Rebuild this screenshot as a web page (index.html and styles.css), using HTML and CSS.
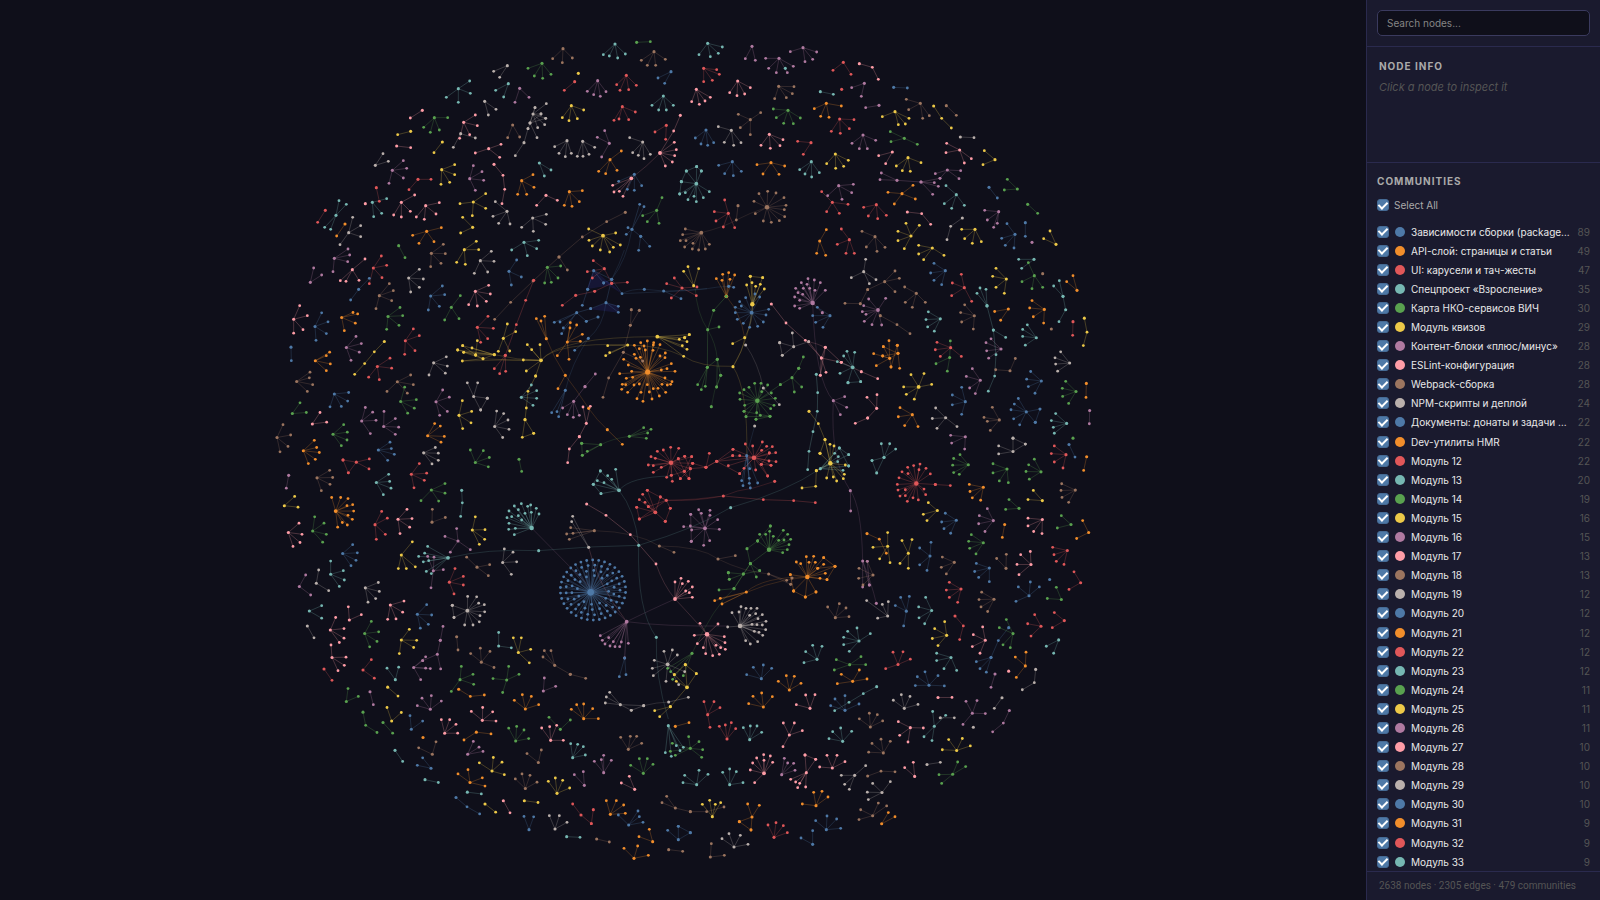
FILE: index.html
```html
<!DOCTYPE html>
<html lang="ru">
<head>
  <meta charset="UTF-8">
  <meta name="viewport" content="width=device-width, initial-scale=1.0">
  <title>Graph</title>
  <link rel="stylesheet" href="styles.css">
</head>
<body>

<main class="graph-area">
  <svg id="graph" class="graph" viewBox="0 0 1366 900" role="img" aria-label="Node graph"></svg>
</main>

<aside class="sidebar">
  <div class="search-wrap">
    <input type="text" class="search" id="search" placeholder="Search nodes..." aria-label="Search nodes">
  </div>
  <section class="info-panel">
    <h3>Node Info</h3>
    <p class="empty">Click a node to inspect it</p>
  </section>
  <section class="legend-wrap">
    <h3>Communities</h3>
    <label class="select-all"><input type="checkbox" id="select-all" checked>Select All</label>
    <div class="legend" id="legend"></div>
  </section>
  <footer class="stats">2638 nodes · 2305 edges · 479 communities</footer>
</aside>

<script src="app.js"></script>
</body>
</html>
```
FILE: styles.css
```css
* {
  box-sizing: border-box;
  margin: 0;
  padding: 0;
}

body {
  display: flex;
  height: 100vh;
  background: #0f0f1a;
  color: #e8e8e8;
  font-family: Inter, "Liberation Sans", sans-serif;
  font-size: 10px;
  overflow: hidden;
}

.graph-area {
  flex: 1;
  min-width: 0;
}

.graph {
  display: block;
  width: 100%;
  height: 100%;
}

.sidebar {
  display: flex;
  flex-direction: column;
  width: 234px;
  background: #1a1a2e;
  border-left: 1px solid #2a2a4e;
}

.search-wrap {
  padding: 10px;
  border-bottom: 1px solid #2a2a4e;
}

.search {
  display: block;
  width: 100%;
  height: 26px;
  padding: 0 9px;
  background: #0f0f1a;
  border: 1px solid #3a3a5e;
  border-radius: 5px;
  color: #e0e0e0;
  font: inherit;
  outline: none;
}

.search::placeholder {
  color: #858585;
}

.search:focus {
  border-color: #4e79a7;
}

h3 {
  color: #aaa;
  font-size: 10px;
  font-weight: 700;
  line-height: 14px;
  letter-spacing: 1px;
  text-transform: uppercase;
}

.info-panel {
  min-height: 116px;
  padding: 12px;
  border-bottom: 1px solid #2a2a4e;
}

.empty {
  margin-top: 7px;
  color: #555;
  font-size: 11px;
  font-style: italic;
  line-height: 14px;
}

.legend-wrap {
  display: flex;
  flex: 1;
  flex-direction: column;
  min-height: 0;
  padding: 11px 10px 0;
}

.select-all {
  display: flex;
  align-items: center;
  gap: 5px;
  margin: 9px 0;
  color: #aaa;
  line-height: 16px;
}

.legend {
  display: flex;
  flex: 1;
  flex-direction: column;
  min-height: 0;
  overflow: hidden;
}

.legend-item {
  display: flex;
  flex: 1;
  align-items: center;
  gap: 6px;
  min-height: 19px;
  cursor: pointer;
}

.dot {
  flex: none;
  width: 10px;
  height: 10px;
  border-radius: 50%;
}

.name {
  flex: 1;
  min-width: 0;
  overflow: hidden;
  white-space: nowrap;
  text-overflow: ellipsis;
}

.count {
  color: #555;
}

input[type="checkbox"] {
  display: flex;
  flex: none;
  align-items: center;
  justify-content: center;
  width: 12px;
  height: 12px;
  appearance: none;
  background: #1a1a2e;
  border: 1px solid #3a3a5e;
  border-radius: 3px;
  cursor: pointer;
}

input[type="checkbox"]:checked {
  background: #4e79a7;
  border-color: #456a94;
}

input[type="checkbox"]:checked::after {
  content: "";
  width: 4px;
  height: 7px;
  margin-bottom: 2px;
  border: solid #fff;
  border-width: 0 2px 2px 0;
  transform: rotate(45deg);
}

.stats {
  padding: 8px 12px;
  border-top: 1px solid #2a2a4e;
  color: #555;
  font-family: Roboto, "Liberation Sans", sans-serif;
  line-height: 12px;
  white-space: nowrap;
}

/* graph */
.edge {
  stroke-opacity: 0.26;
}

.link {
  stroke-opacity: 0.18;
}

.hull {
  fill: #4a4aff;
  fill-opacity: 0.12;
}

/* community colours */
.b { background: #4e79a7; fill: #4e79a7; stroke: #4e79a7; }
.o { background: #f28e2b; fill: #f28e2b; stroke: #f28e2b; }
.r { background: #e15759; fill: #e15759; stroke: #e15759; }
.t { background: #76b7b2; fill: #76b7b2; stroke: #76b7b2; }
.g { background: #59a14f; fill: #59a14f; stroke: #59a14f; }
.y { background: #edc948; fill: #edc948; stroke: #edc948; }
.p { background: #b07aa1; fill: #b07aa1; stroke: #b07aa1; }
.k { background: #ff9da7; fill: #ff9da7; stroke: #ff9da7; }
.n { background: #9c755f; fill: #9c755f; stroke: #9c755f; }
.s { background: #bab0ac; fill: #bab0ac; stroke: #bab0ac; }

circle {
  stroke-width: 0;
}

path.edge,
path.link {
  fill: none;
}
```
FILE: app.js
```js
const COLORS = ['b', 'o', 'r', 't', 'g', 'y', 'p', 'k', 'n', 's'];

const NAMES = [
  'Зависимости сборки (package…',
  'API-слой: страницы и статьи',
  'UI: карусели и тач-жесты',
  'Спецпроект «Взросление»',
  'Карта НКО-сервисов ВИЧ',
  'Модуль квизов',
  'Контент-блоки «плюс/минус»',
  'ESLint-конфигурация',
  'Webpack-сборка',
  'NPM-скрипты и деплой',
  'Документы: донаты и задачи …',
  'Dev-утилиты HMR'
];

const COUNTS = [89, 49, 47, 35, 30, 29, 28, 28, 28, 24, 22, 22, 22, 20, 19, 16, 15,
  13, 13, 12, 12, 12, 12, 12, 11, 11, 11, 10, 10, 10, 10, 9, 9, 9];

// Node positions, grouped by tile. One cluster per line:
//   color[size] hub leaf leaf ...   a leaf is linked to the hub
//   >x,y                            linked to the node before it
//   @x,y,r,n                        ring of n leaves
//   ~color start control end        long link between clusters
//   #a b c                          filled hull
const TILES = [
  { x: 270, y: 30, sx: 3, sy: 3, data: `
s 712,107 671,124 689,142
g 816,100 774,115 793,138 818,145 843,133
t 565,176 599,153 601,190 529,202 565,217
t 715,161 677,181 701,201
p 749,175 735,217 777,202
s 644,214 678,238 655,255
k 457,241 421,264
g 493,263 533,263 461,292 481,307 508,300
k 581,277 616,255 622,287 599,314 569,325
s 572,311 616,324 550,352
y 422,304 383,314
k 380,348 422,353
y 517,336 492,368
n 728,285 713,323 749,321
s 789,252 829,221 795,233 813,252 827,265 824,284 803,293 780,279
s 780,279 795,233 813,252 827,265 774,296 801,323
s 762,338 774,296 736,377
k 656,356 693,343 689,382 616,369
s 316,406 339,371 355,394
p 367,421 400,392 410,415 400,444 357,460
r 444,448 483,448 417,479
r 319,473 328,514
y 515,419 554,404 554,434 539,457 513,463
p 599,446 610,407 636,425 641,451 616,481
k 672,403 >699,436 >704,478 >696,521
t 808,399 823,438 843,420
o 755,452 789,434 792,472 743,493 770,493
t 198,556 207,512 229,523 164,592 182,598
r 166,541 143,577
k 286,521
t 307,517 350,506 311,560 335,550
k 394,517 434,495 421,544 394,561 371,555
k 467,527 508,518 498,552 463,568 439,561
y 610,516 647,491 570,521 647,535 607,557
s 711,544 676,515 669,559 686,580 720,582
k 828,496 800,526 862,511
o 225,582 200,618
s 236,608 248,562 272,587 272,620 210,644
o 470,604 514,593 428,616 447,640 492,635
y 608,592 578,562 572,609
s 788,564 829,553 827,583 755,592 790,604
g 386,647 405,683
n 484,670 520,643 526,671 513,700 482,710
y 583,659 619,634 626,659 560,697 586,703
t 762,637 806,631 800,656 725,660 772,677
p 193,685 234,657 239,675 233,695 189,725
s 631,692 664,664 672,694 653,726 613,730
p 121,757 131,714 155,735
k 247,719 285,687 211,752 228,754 267,751
r 310,714 334,678 350,706 336,743 298,761
b 266,778 298,745 242,810
b 717,724 740,690 754,741 724,765
s 416,744 448,718 460,747 448,772 422,786
n 328,797 358,761 370,782 365,812 318,836
b 482,798 517,768 524,794 508,829 475,840
k 616,784 656,766 661,792 649,814 622,828 596,824` },

  { x: 550, y: 30, sx: 3, sy: 3, data: `
n 39,56 8,86 37,98 67,84
t 195,42 160,74 178,78 203,84 226,72
g 260,37 301,35
n 312,65 274,91 292,106 317,106 346,88
t 473,40 517,51 505,70 481,80 447,74
p 606,49 586,86 616,91
p 687,85 647,85 656,115 679,128 712,128 730,109
t 706,115
p 759,53 721,65 800,66 788,88 765,95
y 85,130
r 74,155 43,181
p 143,152 112,184 131,194 151,199 168,185
r 229,136 200,164 210,181 236,179 259,166
b 363,125 324,144 344,160
r 461,115 500,119 508,133 487,151 461,155
t 340,198 306,226 326,240 349,240 370,226
k 439,178 425,215 448,223 465,213 481,202
k 563,153 539,188 561,197 584,192 601,173
n 686,169 732,170 727,191 709,203 674,206
y 64,227 101,240 82,266 57,272 37,263
r 217,230 256,246 236,269 207,267 192,271
g 714,241 670,237 679,263 701,280 730,281 751,264
o 829,220 793,236 812,259 837,262 874,228
n 601,269 565,253 632,248 571,293 601,314
k 391,256 >371,303 >330,369
k2 330,369 373,337 379,359 374,377 367,396 346,408
r 349,286 315,306 347,328
b 468,300 436,324 453,342 473,346 491,338
s 544,301 505,290 523,337 551,346 573,338
k 658,313 633,346 661,355 690,347 699,329
r 783,338 743,334 760,373
s 51,332 14,350 27,370 46,380 64,370
s 98,334 134,352 117,373 99,379 82,379
s 278,336 239,323 248,368 265,376 282,386 301,373
p 178,340 164,302 142,322 155,381
o 180,389 214,363 146,424 167,431 201,421
b 547,395 506,406 524,431 550,437 574,424
o 663,398 621,404 704,408 687,433 639,432
t 784,395 749,419 765,432 785,441 808,428
t2 439,461 409,423 440,410 454,423 394,455 389,492 406,488 414,509 439,515 432,499 460,503 478,485
t 409,423 440,410 394,455
t 454,423 440,410
t 394,455 389,492
b 253,433 206,454 232,478 253,481 275,467
k2 244,445 188,466 192,486 208,484 219,499
~k 244,445 290,410 330,369
o 58,485 97,482 88,515 66,529 43,526
r 535,550 524,510 493,545 498,573 520,591 554,593
n 564,527 559,570
n3 651,532 627,491 653,484 678,489 702,503 708,526 703,539 704,560 688,572 664,577 640,573 616,551 612,514
n2 454,608 406,597 398,614 391,632 408,632 429,640 404,651 427,657 446,660 466,657 478,643
~n 454,608 520,592 559,570
~n 559,570 600,548 651,532
g 320,541 336,503 278,557 292,575 327,580
n 226,547 >170,575 >97,621 >27,681 >52,720
n 27,681 >-51,753 >-118,817 >-166,868
y2 159,617 116,597 117,631 127,648 151,660 179,666 190,652 211,645 197,609
b 246,598 269,523 282,530 234,593 229,613 272,619
b 272,619 266,661 299,649
o 809,633 829,599 800,670 827,676` },

  { x: 830, y: 30, sx: 3, sy: 3, data: `
r 40,97 9,121 63,133
k 88,101 >127,112 >145,148
p 103,160 65,173 94,199
r 35,178
t -29,185 10,193
b 191,172 232,174
p 147,226 107,233
n 271,220 229,208 236,239 278,265 298,257
y 195,245 157,260 205,284 226,282 237,265
y 311,228 >335,265 >364,294
n 349,227 379,256
r 29,267 72,269 58,296 31,310 4,304
p 99,315 137,331 112,356 88,356 66,340
g 223,325 181,305 183,335 262,343
s 391,321 432,323
k 389,360 350,340 348,368 403,399 424,386
y 495,389 463,362 459,404
k 187,366 146,377 167,401
y 234,383 199,408 217,422 241,424 273,398
y 16,372 55,391 41,409 17,415 -10,401
p 352,420 316,431 330,445 387,446 392,422
p 201,451 154,429 150,449 273,456
p 273,456 330,445 313,458 325,469 308,493
p 26,467 70,463 65,488 36,508 -7,497
r 7,517 54,523 28,550 -10,545 -25,485
o 216,491 249,466 174,487 256,507 193,522
t 379,494 348,467 343,521 365,535 403,526
b 477,472 502,504
g 562,477 532,448 523,480
g 593,523 623,550
p 506,545 464,541 472,570 491,592 502,580
r 139,524 101,532 115,558 143,566 169,556
k 232,546 >275,551 >302,583
s 397,564 >362,589 >351,629
y 435,598 395,598 404,626 427,640 454,635
b 555,613 531,581 515,625 526,646 552,654
b 586,578 586,619
y 678,643 660,603 641,626
p 606,637
r 58,629 34,597 22,643 48,670 73,670
n 135,620 96,604 109,651 141,664 165,652
y 243,618 228,580 268,586 204,604 204,632 223,656
y 307,654 266,646 266,672 281,689 342,676
b 346,722 312,700 302,729 312,751 335,764
s 101,725 107,688 64,743 118,761 138,749
r 403,773 394,733 367,759 365,797 425,814
y 529,747 498,715 488,739 498,772 523,790
g 613,737 595,698 576,755 606,776 638,772
t 612,688 566,688 575,715
n 638,731
o 741,781 729,737 710,755
t 699,799 688,752 671,768
t 471,827 441,790 450,774 468,778
n 164,755 195,723 208,745 195,785 113,779
n 91,821 113,779 45,820
n 259,790 224,771 226,817 247,832 286,817` },

  { x: 430, y: 250, sx: 3, sy: 3, data: `
#491,58 470,118 545,105
#521,90 545,100 576,131 545,112
#480,178 528,158 566,168 567,188
g 64,172 91,137 44,210 87,206
r 142,232 174,199 190,235 173,266 152,277
g 352,52 392,48 384,84 364,97 344,99
r 523,56 490,32 472,65 487,84 545,100
r 545,100 592,97 494,124
r 437,136 494,124 397,166
b 545,88 521,99 576,131
b 491,62 473,118 545,88 521,99
b 473,118 457,166
b 528,158 482,176 565,169 565,187 545,88
b 440,188 373,217 390,216 400,234 395,251 469,214 482,176
b 504,201 469,214
b 475,265 434,301
~b 606,-63 590,30 545,88
~b 583,0 570,40 545,88
~b 528,158 520,230 475,265
~b 475,265 425,340 406,421
b 406,421 365,488 381,485 386,500
~b 576,131 605,116 643,118
~b 643,118 670,120 701,123
~b 576,131 720,125 831,116
b 701,123 753,146
b 643,118
~b 701,123 760,125 831,116
~b 831,116 860,110 897,109
r 756,114 733,84 710,101 724,144 801,111 799,137
y 791,107 774,50 761,64 806,56
~g 795,110 800,190 833,239
g 833,239 851,181 867,231 832,352
~g 833,239 858,280 862,328
g 832,352 803,404 826,409 814,419 862,328
g 862,328 860,411 872,376
g 872,376 860,411
~g 872,376 850,420 844,470
g 844,470
r 311,91 >287,151 >259,224 >226,316
r 226,316 193,356 227,364 209,371
o 349,266 319,206 333,213 344,199
~o 349,266 370,320 406,376
o 406,376 384,416
~o 406,376 440,420 476,475
~o 476,475 500,510 532,539
o 476,475
o 532,539 >577,583
o 412,276 421,218 420,234 440,225 457,253 451,274 417,328 382,317
y2 333,331 292,284 330,284 305,299 280,330 289,363 317,378
y 317,378 >294,424 >289,474 >285,509 >277,562 >311,550
y 285,509 311,550
y 193,314 83,300 98,287 126,294 101,307 137,315
y 137,315 142,272 83,300 98,287
y 159,326 137,315 97,333 101,307 193,314
~y 159,326 250,332 333,331
~y 97,333 220,328 333,331
~y 193,314 260,330 333,331
y 220,265 232,222 257,245 205,304 239,303
t 274,442 304,405 320,422 320,445 309,466
~y 333,331 390,260 682,260
~y 333,331 380,275 593,285
y 593,285 533,287 539,308 527,317
~y 593,285 690,285 761,319
y2 682,260 748,268 764,263 778,254 771,275 757,287 771,298 761,319
~y 761,319 810,352 908,349
y 764,263 778,254
n 604,179 >601,226 >580,307 >536,384 >519,442
n 628,181 601,226
n 638,333 580,307
o4 653,366 652,273 671,278 690,284 706,309 724,341 735,364 726,395 707,427 688,438 666,447 639,454 621,446 593,427 575,418 577,403 569,371 581,328 613,286 632,278 646,300 628,296 669,301 690,318 705,323 711,356 694,360 705,384 722,403 696,403 712,405 684,415 670,416 652,404 658,426 633,427 628,402 612,405 587,404 608,382 589,385 605,364 595,345 613,313 618,325 631,322 642,288 670,285
g 598,559 641,533 663,538 653,549 649,565
~g 512,584 550,565 598,559
g 512,584 455,580 472,604 457,616
g 455,580 457,616
p 431,454 398,474 412,494 430,502 448,496 465,410
p 465,410 496,372
k 469,520 459,471 481,469 448,560
k 448,560 >418,597 >413,638
r3 723,638 722,592 746,595 764,619 785,620 745,626 788,640 781,656 777,686 763,664 751,686 727,694 724,676 710,682 694,652 670,667 670,647 655,645 663,620 682,604 700,600 676,625
r 763,664 745,626 785,620 788,640 777,686 724,676
r 781,656 751,686 777,686 764,619 828,652
r 828,652 838,610 860,634 788,640` },

  { x: 700, y: 250, sx: 3, sy: 3, data: `
o2 79,139 49,86 68,73 86,68 104,75 90,88 66,91
b 86,109 101,112
g 79,139 41,181
~o 79,139 122,190 134,263
y3 157,163 151,79 188,83 156,98 140,105 167,109 181,103 193,117
y 151,79 188,83
b2 155,188 137,143 119,155 124,168 106,172 106,188 112,208 130,220 149,232 173,229 190,216 198,195 206,178 179,141 165,132
~y 157,163 162,210 134,263
~y 134,263 130,300 99,350
~y 157,163 152,260 99,350
y 134,263 98,281
~y 99,350 145,420 140,617
y 99,350
~s 137,285 175,340 190,414
s 190,414 238,464
s 137,285
s 164,528
~b 164,528 155,560 140,617
p3 338,159 324,86 343,90 304,98 321,103 361,98 287,115 310,115 329,115 376,121 294,128 345,121 284,141 299,151 308,133 284,168 299,175
b 390,197 338,197 352,172 347,217 369,232
p 367,188 338,159
k 214,162 >258,219 >316,271 >364,324
k 364,324 326,275 376,292 378,367 361,376 424,337
k 376,292 424,337 361,376
~k 326,275 350,280 376,292
k 484,365 424,337 533,386
s 281,290 277,249 239,278 247,316 326,275
s 239,278 247,316
t2 458,352 441,304 464,307 431,318 412,335 420,370 444,398 482,395
t 444,398 482,395
p 400,452 434,440 440,472 421,494
~p 338,159 345,390 400,452
~p 400,452 390,630 451,722
t 349,373 >353,428 >352,484 >339,545 >327,604 >323,659
y 327,484 >355,521 >375,569 >391,640
y3 391,640 390,583 402,588 360,610 349,662 380,684 400,681 410,693 430,686 433,673 436,645 375,569
y 360,610 375,569
y 349,662 >347,709 >306,714
t 361,656 418,594 404,610 415,620 446,614 413,635 446,648 429,661
t 418,594 446,614 446,648
k 530,475 501,442 531,434 503,504
k 503,504 466,520
o 569,325 567,272 550,290 521,311 548,318 594,310 529,347 573,351
o 594,310 550,290 592,286 599,355 548,318
o 592,286 573,351
r3 162,623 187,576 158,588 200,589 217,590 136,582 208,609 227,608 185,601 207,633 228,635 213,646 184,643 203,678 167,660 132,655 119,671 98,617 119,617 99,598 50,634 85,647
r 50,634 99,598 119,671 17,652 98,617
r 184,643 208,609 203,678 213,646
b 140,617 149,656 125,692 148,685 129,707 148,700 151,714 173,699
~r 224,694 190,705 160,714
r 224,694
g3 172,452 164,400 183,400 203,405 147,412 132,419 119,429 120,448 134,466 132,484 138,500 168,508 170,488 181,496 210,499 212,476 222,466 226,445 214,429 185,425 241,404
g 210,499 168,508 132,484 138,500
g 276,383 241,404 296,355 305,411 283,426
g 296,355 310,321
p2 534,180 557,145 506,147 491,167 487,185 498,193 493,214 516,224 545,225
n 541,197 >591,224 >630,251` },

  { x: 430, y: 460, sx: 3, sy: 3, data: `
t2 567,91 557,28 511,33 533,47 545,58 490,73 502,62 522,68 513,101
t 490,73 511,33 513,101
t3 305,204 274,131 253,138 293,139 302,135 319,145 265,149 237,153 285,160 304,157 327,162 231,173 245,170 265,167 237,190 275,180 236,208 256,205 253,224
~t 567,91 600,50 723,48
~t 567,91 615,150 626,256
~p 305,204 440,345 590,485
b6 482,397 @489,390,98,34 @489,390,81,25 @489,390,64,18 @489,390,47,12
k 470,132 >528,166 >601,224 >678,312
~k 678,312 700,375 735,417
r2 676,157 652,91 638,103 628,119 691,111 645,127 655,140 620,142 706,184
r 709,121 652,91 691,111 655,140 628,177 721,145
r 628,177 676,157 620,142
r 706,184 721,145
~r 709,121 790,125 880,108
s 476,262 428,169 425,185
~k 476,262 500,370 590,485
n 493,212 422,203 410,222 429,220 418,238
n 688,258 732,277
~n 493,212 620,215 688,258
~n 688,258 810,258 865,297
~t 53,294 170,265 326,272
t 326,272
~t 326,272 480,258 626,256
~t 626,256 800,205 901,143
t 626,256
p2 825,205 782,163 806,149 814,160 840,151 840,166 863,179 868,208 839,242 821,256 784,244 785,210 781,198 761,200
p 784,244 782,163
k2 735,417 735,366 753,355 775,364 757,371 787,381 778,398 767,393 787,412
p2 590,485 511,527 517,541 536,533 550,545 525,552 540,558 555,560 569,560 574,546 595,550 584,594
b 584,594 568,650 588,644
k3 831,523 810,490 864,492 793,526 802,551 820,563 883,530 885,548 858,556 872,563 886,568 848,587 827,581 868,583
~p 590,485 650,455 735,417
~p 590,485 700,500 893,498
~k 735,417 790,475 831,523
~t 626,256 620,450 679,532
~t 679,532 675,650 715,777
t 679,532
n 374,616 343,572 363,572 339,591 421,643
n 421,643 467,655
p 340,693 343,654 377,679` },

  { x: 700, y: 460, sx: 3, sy: 3, data: `
g3 207,269 211,198 209,214 179,223 197,223 173,243 220,229 250,211 263,223 236,241 252,240 272,238 267,254 262,269 248,278 151,311
g 211,198 173,243
g 141,266 173,243 151,311
g 151,311 179,332 169,351 130,342
g 130,342 85,338 88,358 102,386 179,332
g 85,338 88,358
g 102,386 57,390 151,311
~g 102,386 40,440 -24,580
o3 322,351 319,290 341,289 371,293 289,306 302,311 327,307 346,307 353,325 371,313 405,319 376,340 360,355 381,359 348,396 316,411 281,393 271,344
o 405,319 371,293 353,325 381,359
o 316,411 281,393 348,396
o 281,393 271,344
o 139,396 44,422 61,415 66,432
~o 139,396 190,350 322,351
~o 66,432 200,360 322,351
s3 120,498 123,440 138,445 153,445 171,445 96,458 117,456 167,461 187,464 149,466 174,476 198,484 156,493 171,494 187,495 197,509 163,514 177,517 188,526 173,545 151,552 137,542 83,501
n 54,297 106,287
~n 54,297 130,335 206,342
n 206,342 260,361 272,373
n 276,354 272,373
p 451,92 452,153
~p 451,92 485,140 488,303
p 488,303 488,381 508,375
~p 488,303 515,370 529,430
p 529,430
n 519,345 502,304 477,325 476,355 489,375
p 508,375 502,304
r 70,108 >190,119 >281,122 >346,128
~r 70,108 -10,120 -101,121
~r 70,108 110,90 160,84
~t 361,26 260,95 92,143
t 92,143
n 406,473 383,441 418,431 438,444 447,470
t 477,543 431,532 443,514 471,504 511,521 431,554 448,574
t 351,598 317,575 338,556 366,559 312,608
b 184,656 140,644 160,622 190,615 215,625
g 449,614 403,630 409,599 483,590 497,614
o 458,664 424,643 478,630 501,657 412,671
o 268,690 235,664 259,647 283,649 303,670
t 530,680 >490,701 >447,727 >404,752` },

  { x: 550, y: 620, sx: 3, sy: 3, data: `
o 640,261 596,251 609,229 635,219 667,230
k 780,265 739,254 767,225 795,224
b 885,271 842,257 855,237 885,227 927,252
r 473,284 462,245 492,245 510,263 480,322
r 531,357 508,319 526,315 544,308 557,326
t 599,359 580,323 601,318 621,318 635,337
k 718,345 700,309 733,309 757,332 699,380
t 878,364 837,356 848,335 872,324 905,334
o 376,319 417,308
g 421,385 416,350 447,365 458,389 455,412 376,406 361,394 367,370
t 355,317 346,398 364,409 379,377 390,392 400,382
n 235,388 212,352 241,349 260,349 275,370
g 280,460 242,436 268,416 292,416 309,433
p 161,458 133,424 154,419 161,406 184,421
p 103,496 73,464 100,455
k 254,508 214,489 238,469
t 68,413 62,371 83,373 100,380 106,405
o 101,296 64,268 80,254 101,252 128,266 145,296
g 31,328 61,300 -3,292
k 2,361 -25,324 -1,320 20,316 40,361
y 21,520 16,474 38,481 59,504 -5,484
r 93,585 68,552 124,611
r 130,569 124,611
o 181,583 169,542 199,542 221,555 226,580
b 236,615 205,585 264,573 268,590 279,607
s 15,627 28,587 51,607 -2,587
t 50,650 90,652
n 140,657 178,666
o 308,665 298,628 267,650
o 252,715 222,685 263,678 295,706
n 356,689 398,694
b 385,659 353,631 385,619 421,638
b 421,638 385,619
n 376,564 336,548 350,529 421,575
n 421,575 >470,575 >522,561
y 487,590 457,553 479,541 496,553 512,548
t 440,494 399,488 404,466 447,451 474,463
t 539,494 518,457 539,447 559,455 579,488
k2 642,460 601,450 608,429 620,414 641,404 661,408 668,427 642,421 614,488
p 695,464 703,415 713,429 731,430 735,451
k 769,458 765,405 797,418 722,478 737,486 743,503 767,501 749,490
k 765,405 797,418
k 847,444 809,441 831,406 861,406 885,425
o 798,557 757,552 791,517 816,514 834,531
o 606,591 593,552 628,556 568,605 603,630
o 568,605 603,630
r 672,652 654,615 678,608 700,617 712,638
s 552,681 516,656 537,641 571,646 594,673
n 481,711 484,671 523,706
b 788,673 753,654 788,632
b 829,629 797,602 831,588 860,597 872,625
s 914,466 947,437 874,466 884,493 898,508
s 211,254 179,217 169,231 166,249 244,271 281,257
s 281,257 244,271
~s 281,257 320,247 356,246
s 356,246 415,232
s2 353,133 342,94 367,90 382,105 313,121 307,145 310,167 348,184 404,155 386,194
y2 411,202 406,134 439,161 373,164 379,184 361,260
y 406,134 373,164 439,161
y 361,260 314,272 329,290
g 426,100 353,145 362,155 368,178 400,167` },

  { x: 265, y: 295, sx: 3, sy: 2.8, data: `
k 86,68 104,30 127,58 114,97 86,107
b 150,88 170,50 189,75 184,108 153,127
o 230,63 264,49 278,53 271,79 238,100
g 369,60 405,35 413,58 402,85 365,96
b 78,146 79,184
p 244,147 273,116 289,136 283,160 258,183
r 421,128 445,95 463,114 450,156 419,166
y 358,130 >328,159 >299,192 >269,222
o 151,184 194,160 184,170 196,193 184,212
r 337,200 375,177 380,205 343,237 311,230
s 506,190 544,173 547,199 541,219 492,224
n 95,242 135,216 133,232 143,251 127,270
n 397,243 437,224 445,251 427,275 366,270
g 407,298 419,258 454,293 448,317 428,331
b 208,277 251,273 248,297 229,312 195,313
p 513,299 533,266 553,286 547,326 524,337
s 626,284 607,246 638,246 667,289 647,322
s 667,289 647,322
y 582,337 592,296 620,326 618,358 593,374
g 82,332 105,302 124,329
k 142,361 165,329 185,356
p 290,353 301,315 323,328 333,351 316,388
p 356,368 357,326 391,346 401,370 391,390
s 689,368 695,325 716,332 729,350 732,376 713,399
n 36,399 54,363 77,392 69,424 45,439
g 204,390 236,363 247,384 246,406 229,422
o 115,436 148,407 155,427 163,441 151,460 130,472
o 488,394 509,360 526,367 538,396 528,412
b 340,434 375,412 379,430 388,446 368,463
s 476,442 511,427 520,443 520,463 501,473
r 274,468 234,462 313,459 312,487 250,498
r 234,462 250,498
g 631,469 616,434 655,436 673,455 670,481
g 762,460 770,494
r 439,502 463,472 485,499 478,519 447,540
t 334,525 371,502 374,522 378,541 355,559
p 71,505 64,541
n 156,512 194,491 203,511 195,530 169,548
g 499,546 540,528 540,555 521,577 468,576
t 590,547 >592,582 >587,620
y 58,590 89,564 99,594
o2 212,605 200,567 227,567 249,570 263,587 246,590 266,605 249,617 262,628 232,637 247,644 218,650
n 501,636 502,600 541,623
y 622,658 631,621 660,657 659,684 643,698
r 330,643 350,606 367,625 361,670 334,684
k 399,628 426,600 441,626 434,650 405,668
k 70,665 102,639 111,670 105,693 84,704
g 143,661 149,621 177,639 184,670 173,692
p 579,689 575,654 540,676 616,713 556,720
b 233,724 263,699 277,722 273,743 258,758
y 409,728 442,691 400,766 424,766 451,761
t2 549,736 488,704 479,723 461,732 475,747 491,744 484,774 499,780
p 505,772 488,732 507,734 535,769 498,820
n 636,762 605,734 674,755 670,786
s 713,749 718,711 744,720 755,747 739,782
t 197,782 197,745 235,772 238,798 223,816
p 103,816 122,784 137,840
s 154,807 161,770 191,828
r 553,804 570,766 595,788 595,812 567,837
s 301,820 340,805 343,830 332,850 309,860
t 133,885 170,870 170,905
s2 607,884 608,844 635,845 641,863 658,867 659,887 645,898 643,915 624,924 599,924 567,903 562,869
s 562,869 567,903
k 376,868 417,857 413,888 393,907 368,908
k 253,910 250,873 289,895
b 457,894 485,867 500,896 490,922 466,933
k 196,938 212,903 237,934 237,961 223,973
g 299,948 319,914 341,943 336,970 314,985
s 127,927 147,960
y 409,966 433,936 455,967 446,987 403,1004
p 517,1006 526,967 473,1024 527,1047
p 526,967 534,928
p 446,1043 482,1013 482,1045 496,1046 467,1077 473,1024
n 575,957 579,994
n 649,1028 617,1004 646,989 675,998 687,1043
t 701,983 701,945 739,988
y 760,1001 745,960 769,960 797,992 793,1030
k 201,1015 198,980 243,1014 238,1037 219,1052
r 294,1050 319,1021 328,1073
r 177,1047 201,1079
t 391,1077 366,1045 401,1042
g 585,1077 589,1040 624,1062 626,1090 559,1110
g 725,1078 684,1074 731,1040 762,1062 713,1113
y 368,1098 399,1123
g 244,1138 249,1102 280,1124
p 315,1111 325,1147
p 496,1160 457,1150 471,1129 499,1122 529,1137
o 581,1104 >616,1124 >658,1120
o 781,1159 748,1135 772,1119 799,1124 821,1147
g 294,1168 >302,1205 >336,1225
y 380,1193 366,1155 409,1169
g 354,1197 383,1227
k 652,1191 619,1166 653,1155 683,1167 693,1193
b 439,1216 435,1178 473,1193
k 539,1227 529,1189 554,1189 573,1202 578,1227
o 634,1224 597,1246 678,1229
g 752,1249 731,1213 755,1208 777,1218 791,1242
o 474,1239
n 502,1286 461,1268 513,1251
p 608,1286 625,1250 642,1266 654,1278
t 390,1275 413,1306
b 498,1325 457,1317 473,1296
n 820,1309 786,1284 829,1274
y 681,1333 643,1310 685,1295 711,1308 718,1343
o 615,1365 579,1341 609,1329 652,1352 660,1375
t 480,1357 520,1365
n 781,1382 751,1355 771,1341 795,1345 816,1364
t 607,1392 649,1397
b 573,1407 >606,1433 >644,1453
y 660,1425 692,1448
k 715,1416 735,1450
y 778,1416 819,1421
b 792,1497 777,1460 806,1461` },

  { x: 845, y: 295, sx: 3, sy: 2.85, data: `
t 286,68 250,48 243,70 248,91 268,103
n 388,59 359,28 347,50 350,77 385,97
o 490,40 449,47 467,72
o 598,41 561,16 554,37 565,62 596,80
t 662,42 654,4 642,76
y 718,66 >726,106 >715,144
r 684,76 683,115
n 619,97
t 574,122 547,85 533,98 533,118 541,143
s 674,194 647,162 630,179 632,197 638,217
p 468,154 438,125 423,136 425,159 431,180
t 426,31 >445,100 >453,170 >449,231 >430,274
t 445,100 482,121
r 317,150 276,135 271,156 286,175 349,175
g 314,178 316,131 273,196 307,217
n 495,216 511,181 452,213
p 406,243 382,210 364,232 374,265 391,281
b 589,245 557,218 545,240 550,261 570,280
g 693,275 662,246 652,266 653,289 671,309
o 724,252 723,292
y2 221,262 198,227 237,224 260,255 176,262 184,283 208,297
b 361,304 350,263 322,285 322,313 350,340
b 544,333 520,295 498,327 508,311 506,353 524,370 571,363 585,325
b 571,363 585,325
o 202,341 165,321 160,347 179,372 219,375
s 302,350 272,322 262,352 276,380 336,375
n 463,356 442,320 417,349 427,360 436,386
t 665,366 632,338 619,358 625,377 628,394
p 734,329 733,367
p 361,404 317,400 320,422 359,439
s 504,446 504,408 541,425 461,430 461,453
s 504,408 541,425
g 684,408
b 672,426 690,462
r 663,455 628,430 619,452 628,476 654,493
o 725,461 716,500
t 117,463 109,424 134,424 152,439 81,472
t 95,507 81,472 117,463
g 370,484 345,455 326,466 323,485 326,506 343,511
g 486,496 444,481 444,507 463,530 490,535
g 588,504 568,468 551,484 543,503 553,525
r3 214,537 225,482 206,486 188,491 171,504 162,521 157,540 159,556 165,573 187,588 181,572 204,578 220,584 242,569 237,553 256,510 243,494 222,498 189,509 181,555 271,540
r 271,540 316,543
o 415,548 373,540 375,560 382,578 407,585
n 691,556 650,538 648,557 651,577 671,591
y 592,586 565,557 549,583
g 522,608 492,583 482,611
y 277,614 250,592 235,625 246,643
b 334,642 301,622 290,647 297,666 317,679
p 445,643 427,609 403,629 401,652 420,674
k 592,640 549,636 549,658 566,674 591,680
g 678,654 649,629 637,664
o 479,654 472,691
o 731,677 713,643 695,694
g 415,706 379,683 371,702 374,722 393,738
y 128,716 128,677 84,719 104,752 135,763
o 66,680 >103,696 >124,736
y 190,736 171,700 201,697 165,765 190,779
b 255,744 258,705 224,721 224,769 246,785
r 667,728 623,719 627,740 634,759 657,768
n 328,762 292,747 289,776 304,795
n 483,779 484,739 455,751
b 433,778 394,765 389,788 401,805 433,817
k 558,768 556,731 527,740 516,768 522,797
r 707,820 687,789 672,839
b 614,811
b 552,857 556,818 583,832 520,832 513,873
g 649,868 634,833 607,865
r 348,838 313,819 304,841 313,862 338,876
n 447,867 410,847 402,868 408,889 428,902
b 184,901 167,862 193,859 151,885 176,943
t 260,899 242,862 221,889 222,920 239,937
s 128,915 65,871 112,882 130,874 98,921
r 330,915 >355,943 >344,982
r 588,944 569,911 548,937 558,972
r 658,928 628,905 622,948
y 305,970 299,931 269,951 262,979 279,999
k 421,984 413,946 385,968 382,1002 405,1021
g 504,965 484,925 463,948 474,997 496,1005
b 491,948 >460,985 >438,1033
b 438,1033 394,1045 405,1065 424,1075
t 641,983 604,1001 626,1021
r 159,1053 144,1018 174,1017 196,1038 122,1065
t 318,1033 275,1021 275,1042 297,1065 335,1070
o 541,1057 543,1018 511,1032 514,1090
k 491,1072
p 450,1080 438,1118
s 572,1067 >568,1105 >532,1125
b 252,1112 217,1088 240,1074 279,1085 211,1113 298,1114
k 279,1147 321,1147
s 178,1178 145,1155 169,1139 195,1144 219,1167
p 382,1192 363,1158 396,1156 421,1193 354,1224
s 471,1148 448,1178
p 493,1184 >475,1220 >443,1245
t 268,1229 263,1187 302,1198 237,1259 261,1270
s 286,1205 328,1205
s 385,1232
n 76,1231 43,1208 73,1192 97,1196 113,1214
k 196,1233 160,1216 235,1234 164,1255 189,1274
y 335,1298 311,1267 352,1264 376,1285 292,1296
n 115,1305 81,1278 108,1266 136,1272 71,1303
k 209,1372 205,1332 179,1347
s 246,1338 286,1332
g 323,1366 338,1331 362,1344 282,1367 290,1392
n 68,1371 >108,1357 >150,1359
s 111,1418 83,1392 136,1387 67,1417 70,1438
n 83,1484 47,1467 100,1448 125,1456 42,1495
o 110,1507 130,1475 150,1487` }
];

const SVG_NS = 'http://www.w3.org/2000/svg';

function make(tag, className, attrs) {
  const el = document.createElementNS(SVG_NS, tag);
  el.setAttribute('class', className);
  for (const key in attrs) el.setAttribute(key, attrs[key]);
  return el;
}

function drawGraph() {
  const svg = document.getElementById('graph');
  const edges = make('g', 'edges', {});
  const nodes = make('g', 'nodes', {});

  TILES.forEach(tile => {
    const point = (x, y) => [tile.x + x / tile.sx, tile.y + y / tile.sy];
    const parse = text => point(...text.split(',').map(Number));
    const line = (color, a, b) => edges.appendChild(
      make('path', 'edge ' + color, { d: `M${a}L${b}` }));
    const node = (color, p, r) => nodes.appendChild(
      make('circle', color, { cx: p[0], cy: p[1], r: r }));

    tile.data.trim().split('\n').forEach(row => {
      if (row[0] === '#') {
        const points = row.slice(1).split(' ').map(parse).join(' ');
        edges.appendChild(make('polygon', 'hull', { points }));
        return;
      }
      const [head, ...items] = row.split(' ');
      if (head[0] === '~') {
        const [a, c, b] = items.map(parse);
        edges.appendChild(make('path', 'link ' + head[1], { d: `M${a}Q${c} ${b}` }));
        return;
      }

      const color = head[0];
      const size = Number(head.slice(1)) || 1;
      const hub = parse(items[0]);
      let last = hub;
      items.slice(1).forEach(item => {
        if (item[0] === '@') {
          const [cx, cy, r, n] = item.slice(1).split(',').map(Number);
          for (let i = 0; i < n; i++) {
            const a = (i + r / 40) / n * Math.PI * 2;
            const p = point(cx + Math.cos(a) * r, cy + Math.sin(a) * r * 0.92);
            line(color, hub, p);
            node(color, p, 1.4);
          }
          return;
        }
        const chained = item[0] === '>';
        const p = parse(chained ? item.slice(1) : item);
        line(color, chained ? last : hub, p);
        node(color, p, 1.4);
        last = p;
      });
      node(color, hub, 1.2 + size * 0.35);
    });
  });

  svg.append(edges, nodes);
}

function drawLegend() {
  const legend = document.getElementById('legend');
  COUNTS.forEach((count, i) => {
    const item = document.createElement('label');
    item.className = 'legend-item';
    item.innerHTML = `<input type="checkbox" checked>
      <span class="dot ${COLORS[i % COLORS.length]}"></span>
      <span class="name">${NAMES[i] || 'Модуль ' + i}</span>
      <span class="count">${count}</span>`;
    legend.appendChild(item);
  });

  const all = document.getElementById('select-all');
  all.addEventListener('change', () => {
    legend.querySelectorAll('input').forEach(box => box.checked = all.checked);
  });
}

drawGraph();
drawLegend();
```
